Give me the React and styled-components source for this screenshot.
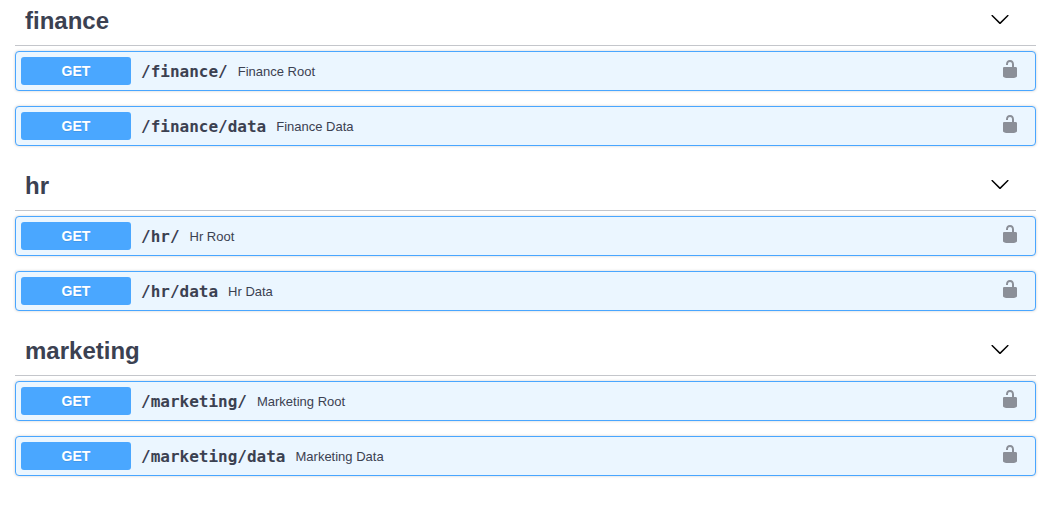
import React, { useState } from "react";
import styled, { createGlobalStyle } from "styled-components";

const GlobalStyle = createGlobalStyle`
  *, *::before, *::after { box-sizing: border-box; }
  body {
    margin: 0;
    background: #fff;
    color: #3b4151;
    font-family: "Liberation Sans", Arial, sans-serif;
  }
  button {
    margin: 0;
    padding: 0;
    border: 0;
    background: none;
    color: inherit;
    font: inherit;
    cursor: pointer;
  }
`;

const Page = styled.main`
  margin-top: -4px;
  padding: 0 20px 32px 15px;
`;

const TagHeader = styled.header`
  display: flex;
  align-items: center;
  height: 50px;
  margin-bottom: 5px;
  padding: 0 20px 0 10px;
  border-bottom: 1px solid #c4c6cb;
`;

const TagName = styled.h3`
  flex: 1;
  margin: 0;
  font-size: 24px;
  line-height: 28px;
  font-weight: 700;
`;

const ExpandButton = styled.button`
  display: flex;
  padding: 0 6px 4px;
  color: #000;

  svg {
    transform: ${({ $open }) => ($open ? "none" : "rotate(-90deg)")};
  }
`;

const Operation = styled.div`
  display: flex;
  align-items: center;
  height: 40px;
  margin-bottom: 15px;
  padding: 5px;
  border: 1px solid #49a6ff;
  border-radius: 4px;
  background: #ebf6ff;
  box-shadow: 0 0 3px rgba(0, 0, 0, 0.19);
`;

const SummaryButton = styled.button`
  flex: 1;
  min-width: 0;
  display: flex;
  align-items: center;
  text-align: left;
`;

const Method = styled.span`
  width: 110px;
  padding: 6px 0;
  border-radius: 3px;
  background: #4aa7ff;
  color: #fff;
  font-size: 14px;
  line-height: 16px;
  font-weight: 700;
  text-align: center;
  text-shadow: 0 1px 0 rgba(0, 0, 0, 0.1);
`;

const Path = styled.span`
  padding: 2px 10px 0;
  font-family: "DejaVu Sans Mono", monospace;
  font-size: 16px;
  line-height: 20px;
  font-weight: 700;
`;

const Description = styled.span`
  padding-top: 2px;
  font-size: 13px;
  line-height: 16px;
`;

const LockButton = styled.button`
  display: flex;
  padding: 0 10px 4px;
  color: #8b8f98;
`;

const ArrowIcon = () => (
  <svg width="20" height="20" viewBox="0 0 20 20" fill="currentColor" aria-hidden="true">
    <path d="M17.418 6.109c.272-.268.709-.268.979 0s.271.701 0 .969l-7.908 7.83c-.27.268-.707.268-.979 0l-7.908-7.83c-.27-.268-.27-.701 0-.969.271-.268.709-.268.979 0L10 13.25l7.418-7.141z" />
  </svg>
);

const UnlockedIcon = () => (
  <svg width="20" height="20" viewBox="0 0 20 20" fill="currentColor" aria-hidden="true">
    <path d="M15.8 8H14V5.6C14 2.703 12.665 1 10 1 7.334 1 6 2.703 6 5.6V6h2v-.801C8 3.754 8.797 3 10 3c1.203 0 2 .754 2 2.199V8H4c-.553 0-1 .646-1 1.199V17c0 .549.428 1.139.951 1.307l1.197.387C5.672 18.861 6.55 19 7.1 19h5.8c.549 0 1.428-.139 1.951-.307l1.196-.387c.524-.167.953-.757.953-1.306V9.199C17 8.646 16.352 8 15.8 8z" />
  </svg>
);

const tags = [
  {
    name: "finance",
    operations: [
      { path: "/finance/", description: "Finance Root" },
      { path: "/finance/data", description: "Finance Data" },
    ],
  },
  {
    name: "hr",
    operations: [
      { path: "/hr/", description: "Hr Root" },
      { path: "/hr/data", description: "Hr Data" },
    ],
  },
  {
    name: "marketing",
    operations: [
      { path: "/marketing/", description: "Marketing Root" },
      { path: "/marketing/data", description: "Marketing Data" },
    ],
  },
];

function TagSection({ name, operations }) {
  const [open, setOpen] = useState(true);
  return (
    <section>
      <TagHeader>
        <TagName>{name}</TagName>
        <ExpandButton
          type="button"
          $open={open}
          aria-expanded={open}
          aria-label={`Toggle ${name}`}
          onClick={() => setOpen(!open)}
        >
          <ArrowIcon />
        </ExpandButton>
      </TagHeader>
      {open &&
        operations.map(({ path, description }) => (
          <Operation key={path}>
            <SummaryButton type="button">
              <Method>GET</Method>
              <Path>{path}</Path>
              <Description>{description}</Description>
            </SummaryButton>
            <LockButton type="button" aria-label={`Authorize ${path}`}>
              <UnlockedIcon />
            </LockButton>
          </Operation>
        ))}
    </section>
  );
}

export default function App() {
  return (
    <>
      <GlobalStyle />
      <Page>
        {tags.map((tag) => (
          <TagSection key={tag.name} {...tag} />
        ))}
      </Page>
    </>
  );
}
